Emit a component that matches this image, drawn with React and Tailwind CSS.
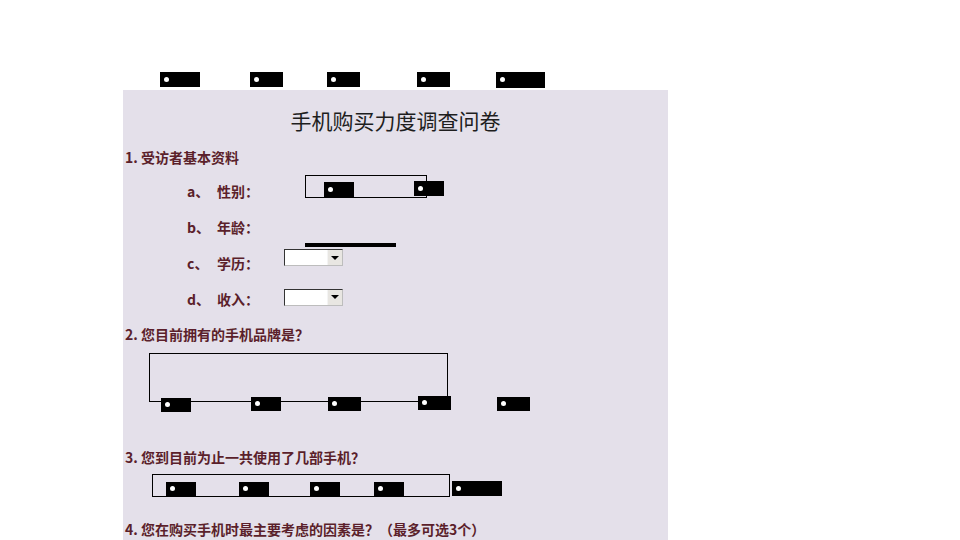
import React from 'react';

// black option-button control with the little white dot
function OptionBox({ className = '' }) {
  return (
    <div className={`shrink-0 bg-black flex items-center ${className}`}>
      <span className="ml-[4px] -mt-[1px] w-[5px] h-[5px] rounded-full bg-white" />
    </div>
  );
}

function SelectBox({ className = '' }) {
  return (
    <div
      className={`flex w-[59px] h-[17px] bg-white border-t border-l border-[#333] border-b border-r border-b-[#bdbdbd] border-r-[#bdbdbd] ${className}`}
    >
      <div className="flex-1" />
      <div className="w-[15px] h-full bg-[#e8e6e2] border-l border-[#f4f4f4] flex items-center justify-center">
        <span className="w-0 h-0 border-l-[4px] border-r-[4px] border-t-[4px] border-l-transparent border-r-transparent border-t-black" />
      </div>
    </div>
  );
}

function Row({ k, label, children }) {
  return (
    <div className="h-[36px] flex items-center pl-[64px] text-[14px] font-bold">
      <span className="w-[30px]">{k}</span>
      <span className="w-[67px]">{label}</span>
      {children}
    </div>
  );
}

export default function App() {
  const font = { fontFamily: '"Noto Sans CJK SC", "Noto Sans", sans-serif' };

  return (
    <div className="w-[960px] h-[540px] bg-white overflow-hidden" style={font}>
      {/* loose controls above the panel */}
      <div className="h-[90px] pt-[72px] pl-[160px] flex items-start">
        <OptionBox className="w-[40px] h-[15px]" />
        <OptionBox className="ml-[50px] w-[33px] h-[15px]" />
        <OptionBox className="ml-[44px] w-[33px] h-[15px]" />
        <OptionBox className="ml-[57px] w-[33px] h-[15px]" />
        <OptionBox className="ml-[46px] w-[49px] h-[16px]" />
      </div>

      <div className="ml-[123px] w-[545px] h-[450px] pt-[10px] bg-[#e4e0ea] text-[#5b1f2b]">
        <div className="h-[40px] leading-[40px] text-center text-[21px] text-[#1e1e1e]">
          手机购买力度调查问卷
        </div>

        <div className="h-[33px] leading-[34px] pl-[2px] text-[14px] font-bold">1. 受访者基本资料</div>

        <Row k="a、" label="性别：">
          <div className="ml-[21px] -mt-[9px] w-[122px] h-[23px] border border-black flex items-start pl-[18px]">
            <OptionBox className="mt-[6px] w-[30px] h-[15px]" />
            <OptionBox className="ml-[60px] mt-[5px] w-[30px] h-[15px]" />
          </div>
        </Row>
        <Row k="b、" label="年龄：">
          <div className="ml-[21px] self-end -mb-[2px] w-[91px] h-[4px] bg-black" />
        </Row>
        <Row k="c、" label="学历：">
          <SelectBox className="-mt-[11px]" />
        </Row>
        <Row k="d、" label="收入：">
          <SelectBox className="-mt-[4px]" />
        </Row>

        <div className="h-[33px] leading-[34px] pl-[2px] text-[14px] font-bold">2. 您目前拥有的手机品牌是？</div>
        <div className="h-[88px] pl-[26px] pt-[3px]">
          <div className="w-[299px] h-[49px] border border-black" />
          <div className="-mt-[5px] pl-[12px] flex items-start">
            <OptionBox className="mt-[1px] w-[30px] h-[14px]" />
            <OptionBox className="ml-[60px] w-[30px] h-[14px]" />
            <OptionBox className="ml-[47px] w-[33px] h-[14px]" />
            <OptionBox className="ml-[57px] -mt-[1px] w-[33px] h-[14px]" />
            <OptionBox className="ml-[46px] w-[33px] h-[14px]" />
          </div>
        </div>

        <div className="h-[36px] leading-[38px] pl-[2px] text-[14px] font-bold">3. 您到目前为止一共使用了几部手机？</div>
        <div className="h-[36px] pl-[29px] flex items-start">
          <div className="w-[298px] h-[23px] border border-black flex items-start pt-[7px] pl-[13px]">
            <OptionBox className="w-[30px] h-[14px]" />
            <OptionBox className="ml-[43px] w-[30px] h-[14px]" />
            <OptionBox className="ml-[41px] w-[30px] h-[14px]" />
            <OptionBox className="ml-[34px] w-[30px] h-[14px]" />
          </div>
          <OptionBox className="ml-[2px] mt-[7px] w-[50px] h-[15px]" />
        </div>

        <div className="h-[36px] leading-[38px] pl-[2px] text-[14px] font-bold">4. 您在购买手机时最主要考虑的因素是？（最多可选3个）</div>
      </div>
    </div>
  );
}
